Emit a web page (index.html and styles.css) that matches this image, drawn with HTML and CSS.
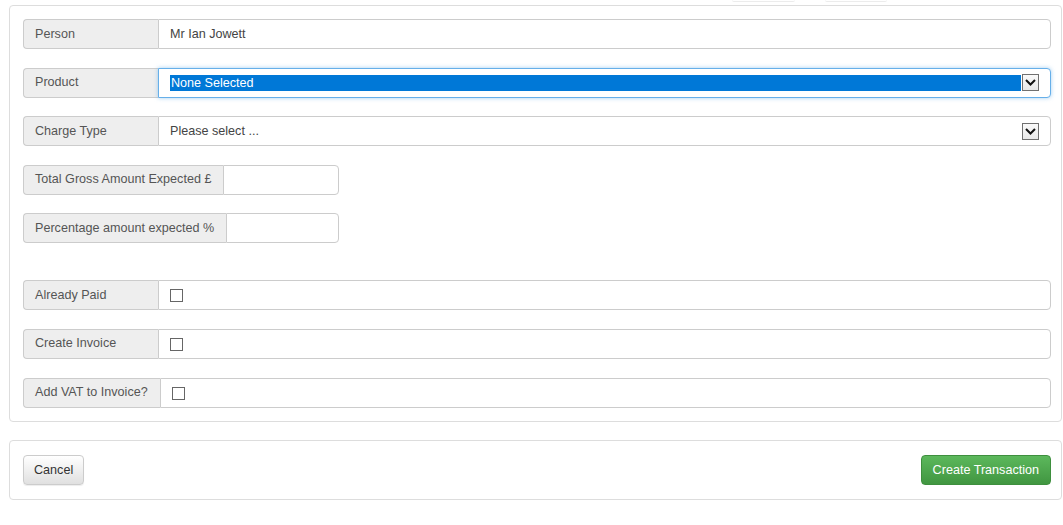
FILE: index.html
```html
<!DOCTYPE html>
<html lang="en">
  <head>
    <meta charset="UTF-8" />
    <title>Create Transaction</title>
    <link rel="stylesheet" href="styles.css">
  </head>
  <body>
    <div class="top-tabs">
      <span class="tab tab-first"></span>
      <span class="tab"></span>
    </div>

    <div class="panel">
      <div class="input-group">
        <span class="addon">Person</span>
        <div class="control">Mr Ian Jowett</div>
      </div>

      <div class="input-group">
        <span class="addon">Product</span>
        <div class="control select focused">
          <span class="selected-text">None Selected</span>
          <span class="arrow"><svg width="11" height="7" viewBox="0 0 11 7"><path d="M1 1l4.5 4.5L10 1" fill="none" stroke="#111" stroke-width="2"/></svg></span>
        </div>
      </div>

      <div class="input-group">
        <span class="addon">Charge Type</span>
        <div class="control select">
          <span class="select-text">Please select ...</span>
          <span class="arrow"><svg width="11" height="7" viewBox="0 0 11 7"><path d="M1 1l4.5 4.5L10 1" fill="none" stroke="#111" stroke-width="2"/></svg></span>
        </div>
      </div>

      <div class="input-group short">
        <span class="addon">Total Gross Amount Expected &pound;</span>
        <div class="control"></div>
      </div>

      <div class="input-group short">
        <span class="addon">Percentage amount expected %</span>
        <div class="control"></div>
      </div>

      <div class="spacer"></div>

      <div class="input-group">
        <span class="addon">Already Paid</span>
        <div class="control"><span class="checkbox"></span></div>
      </div>

      <div class="input-group">
        <span class="addon">Create Invoice</span>
        <div class="control"><span class="checkbox"></span></div>
      </div>

      <div class="input-group">
        <span class="addon">Add VAT to Invoice?</span>
        <div class="control"><span class="checkbox"></span></div>
      </div>
    </div>

    <div class="panel actions">
      <button class="btn btn-default">Cancel</button>
      <button class="btn btn-success">Create Transaction</button>
    </div>
  </body>
</html>
```

FILE: styles.css
```css
/* General Styles */
body {
  font-family: "Liberation Sans", Arial, sans-serif;
  font-size: 12.6px;
  color: #555;
  background: #fff;
  margin: 0;
  padding: 0 1px 0 9px;
}

.top-tabs {
  display: flex;
  height: 5px;
  padding-left: 723px;
  gap: 30px;
}

.tab {
  width: 62px;
  height: 1px;
  border-bottom: 1px solid #ececec;
  border-radius: 0 0 3px 3px;
}

.tab-first {
  width: 63px;
}

/* Panels */
.panel {
  border: 1px solid #ddd;
  border-radius: 4px;
  padding: 13px 10px 13px 13px;
  margin-bottom: 18px;
}

.input-group {
  display: flex;
  height: 30px;
  margin-bottom: 18.6px;
}

.input-group:last-child {
  margin-bottom: 0;
}

.input-group.short {
  width: 316px;
}

.spacer {
  height: 18.4px;
}

.addon {
  display: flex;
  align-items: center;
  min-width: 111px;
  padding: 0 12px 1px 11px;
  background: #eee;
  border: 1px solid #ccc;
  border-right: none;
  border-radius: 4px 0 0 4px;
  white-space: nowrap;
}

.control {
  flex: 1;
  display: flex;
  align-items: center;
  padding: 0 12px 1px 11px;
  border: 1px solid #ccc;
  border-radius: 0 4px 4px 0;
  background: #fff;
  color: #444;
}

.select {
  padding-right: 11px;
  padding-bottom: 0;
}

.select-text {
  flex: 1;
  padding-bottom: 1px;
}

.focused {
  border-color: #66afe9;
  box-shadow: 0 0 4px rgba(102, 175, 233, 0.6);
}

.selected-text {
  flex: 1;
  height: 16px;
  line-height: 16px;
  background: #0078d7;
  color: #fff;
  padding-left: 1px;
}

.arrow {
  width: 15px;
  height: 15px;
  border: 1px solid #707070;
  background: linear-gradient(#fafafa, #e8e8e8);
  display: flex;
  align-items: center;
  justify-content: center;
  margin-left: 1px;
}

.checkbox {
  width: 11px;
  height: 11px;
  border: 1px solid #666;
  background: #fff;
  margin-top: 2px;
}

/* Buttons */
.actions {
  display: flex;
  justify-content: space-between;
  padding: 14px 10px 14px 13px;
}

.btn {
  font-family: inherit;
  font-size: 12.6px;
  height: 30px;
  padding: 0 10px;
  border-radius: 4px;
  cursor: pointer;
}

.btn-default {
  color: #333;
  border: 1px solid #ccc;
  background: linear-gradient(#fff, #e0e0e0);
  box-shadow: 0 1px 1px rgba(0, 0, 0, 0.075);
}

.btn-success {
  color: #fff;
  border: 1px solid #3e8f3e;
  background: linear-gradient(#5cb85c, #419641);
  padding: 0 11px;
}
```
